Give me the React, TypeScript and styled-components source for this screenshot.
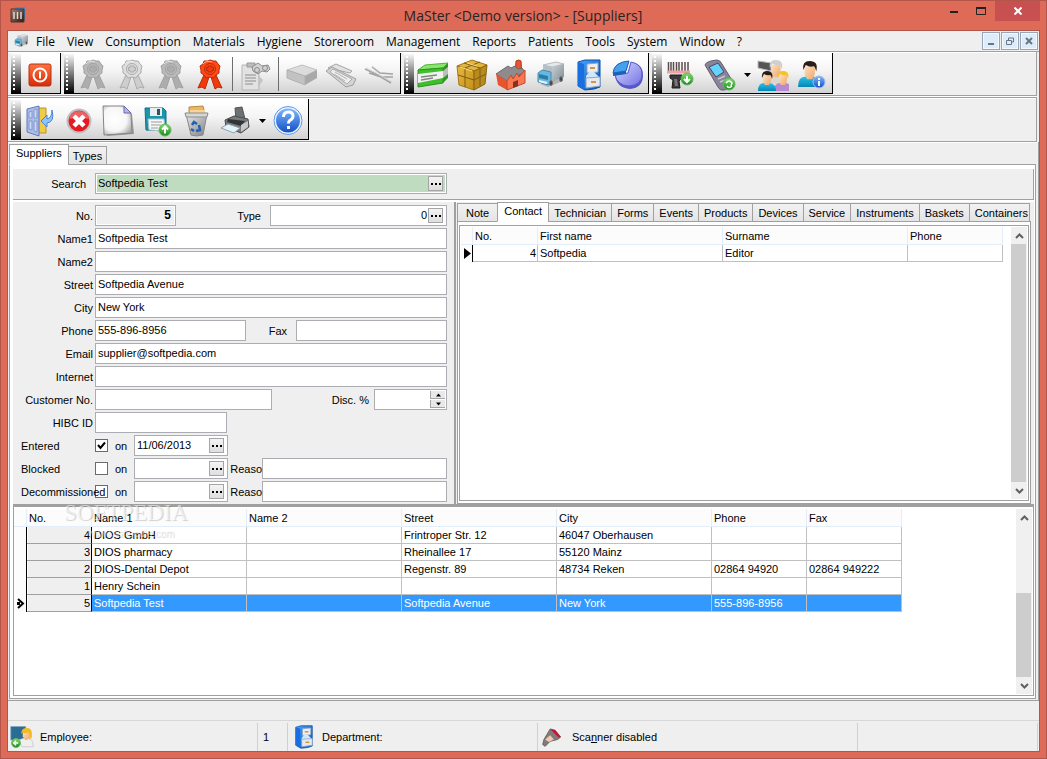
import React from 'react';
import styled, { createGlobalStyle, css } from 'styled-components';

const C = {
  frame: '#de6a58',
  frameDark: '#b35548',
  face: '#efefef',
  line: '#a0a0a0',
  edge: '#abadb3',
  cell: '#c0c0c0',
  head: '#e3eefb',
  select: '#3399ff',
};

const Global = createGlobalStyle`
  *, *::before, *::after { box-sizing: border-box; }
  body { margin: 0; background: ${C.frame}; font: 11px/13px "Liberation Sans", Arial, sans-serif; color: #000; }
  button, input { font: inherit; color: inherit; margin: 0; border-radius: 0; }
  button { padding: 0; border: 0; background: none; cursor: default; }
`;

/* ---------- window frame ---------- */

const Window = styled.div`
  display: flex;
  flex-direction: column;
  min-height: 100vh;
  border: 1px solid ${C.frameDark};
  padding: 0 6px 6px;
  background: ${C.frame};
`;

const TitleBar = styled.header`
  display: flex;
  height: 29px;
  padding-left: 3px;
`;

const AppIcon = styled.span`
  flex: 0 0 16px;
  padding-top: 6px;
`;

const Title = styled.h1`
  flex: 1;
  margin: 0;
  padding-left: 80px;
  text-align: center;
  font: 14px/29px "Open Sans", "Segoe UI", sans-serif;
  color: #2b2222;
`;

const Caption = styled.button<{ $close?: boolean }>`
  display: flex;
  justify-content: center;
  align-items: center;
  width: ${p => (p.$close ? 45 : 27)}px;
  height: 20px;
  ${p => p.$close && css`background: #c75050; margin-left: 1px;`}
`;

const Client = styled.div`
  flex: 1;
  display: flex;
  flex-direction: column;
  border: 1px solid ${C.frameDark};
  background: ${C.face};
`;

const MenuBar = styled.nav`
  display: flex;
  height: 21px;
  padding: 0 1px 0 5px;
  border-bottom: 1px solid ${C.line};
`;

const MenuIcon = styled.span`
  flex: 0 0 17px;
  padding-top: 2px;
`;

const MenuItem = styled.button`
  padding: 0 6px;
  font: 12px/17px "Open Sans", "Segoe UI", sans-serif;
`;

const MdiButtons = styled.div`
  display: flex;
  gap: 1px;
  margin-left: auto;
  padding-top: 1px;
`;

const MdiButton = styled.button`
  display: flex;
  align-items: center;
  justify-content: center;
  width: 18px;
  height: 18px;
  border: 1px solid #97a5b6;
  background: #deebf8;
  box-shadow: inset 0 0 0 1px #f2f8fe;
`;

/* ---------- tool bars ---------- */

const ToolRow = styled.div<{ $second?: boolean }>`
  display: flex;
  gap: 3px;
  height: 45px;
  padding: 1px 3px 0;
  margin-right: 2px;
  border: solid ${C.line};
  border-width: ${p => (p.$second ? '1px 1px 1px 0' : '0 1px 1px 0')};
  box-shadow: inset 0 1px #fff, 0 1px #fff;
  ${p => !p.$second && css`height: 44px; margin-bottom: 1px;`}
`;

const Band = styled.div`
  display: flex;
  height: 41px;
  border-right: 1px solid #000;
  border-bottom: 1px solid #000;
  background: linear-gradient(#fff 8%, #f4f4f4 45%, #d2d2d2);
`;

const Grip = styled.span`
  flex: 0 0 10px;
  background:
    repeating-linear-gradient(#fff 0 2px, transparent 2px 4px) 2px 3px / 2px 36px no-repeat,
    linear-gradient(#fff, #8c8c8c 45%, #000);
`;

const Tool = styled.button`
  display: flex;
  justify-content: center;
  align-items: center;
  width: 39px;
  padding: 3px 2px 0 0;
`;

const Drop = styled.button`
  display: flex;
  justify-content: center;
  align-items: center;
  width: 14px;
  padding-top: 3px;
`;

const Rule = styled.span`
  width: 1px;
  margin: 4px 4px 2px 2px;
  background: #6e6e6e;
`;

/* ---------- tabs ---------- */

const Pages = styled.main`
  flex: 1;
  display: flex;
  flex-direction: column;
  padding: 2px 2px 1px 1px;
  border-right: 1px solid ${C.line};
  border-bottom: 1px solid ${C.line};
`;

const TabStrip = styled.div`
  display: flex;
  align-items: flex-end;
  position: relative;
  z-index: 1;
  margin-bottom: -1px;
`;

const Tab = styled.button<{ $on?: boolean; $small?: boolean }>`
  flex: none;
  height: 19px;
  padding: 1px ${p => (p.$small ? 5 : 4)}px 0;
  border: 1px solid ${C.line};
  margin-left: -1px;
  white-space: nowrap;
  background: linear-gradient(#f2f2f2, #e4e4e4);
  &:first-child { margin-left: 0; padding: 1px 8px 0; }
  ${p => p.$small && css`&:last-child { padding-right: 1px; }`}
  ${p => p.$on && css`
    height: ${p.$small ? 20 : 21}px;
    padding: 0 6px 2px;
    border-bottom-color: #fff;
    background: #fff;
    &:first-child { padding: 0 6px 2px; }
  `}
`;

const Sheet = styled.section`
  flex: 1;
  display: flex;
  flex-direction: column;
  padding: 4px 1px 2px 3px;
  border: 1px solid ${C.line};
  background: #fff;
`;

const SearchBar = styled.div`
  display: flex;
  align-items: flex-start;
  height: 31px;
  padding: 4px 0 0 1px;
  margin-bottom: 2px;
  border-right: 1px solid ${C.line};
  border-bottom: 1px solid ${C.line};
  background: ${C.face};
`;

const Middle = styled.div`
  display: flex;
  height: 302px;
  background: ${C.face};
`;

const Form = styled.form`
  flex: 0 0 443px;
  min-width: 0;
  display: flex;
  flex-direction: column;
  gap: 2px;
  padding: 3px 0 0 1px;
  border-right: 2px solid ${C.line};
`;

const Row = styled.div`
  display: flex;
  height: 21px;
`;

const Label = styled.label<{ $w?: number; $left?: boolean; $pad?: number }>`
  position: relative;
  z-index: 1;
  flex: 0 0 ${p => p.$w ?? 81}px;
  min-width: 0;
  padding: 5px ${p => p.$pad ?? 2}px 0 0;
  text-align: right;
  white-space: nowrap;
  ${p => p.$left && css`text-align: left; padding-left: 7px;`}
`;

const Box = styled.span<{ $w: number; $tone?: string }>`
  display: flex;
  align-items: center;
  flex: 0 0 ${p => p.$w}px;
  min-width: 0;
  height: 21px;
  padding: 1px;
  border: 1px solid ${C.edge};
  background: ${p => p.$tone ?? '#fff'};
  background-clip: content-box;
  box-shadow: inset 0 0 0 1px #fff;
`;

const Text = styled.input<{ $right?: boolean; $bold?: boolean }>`
  flex: 1;
  min-width: 0;
  height: 17px;
  padding: 0 1px 2px;
  border: 0;
  outline: 0;
  background: none;
  text-align: ${p => (p.$right ? 'right' : 'left')};
  ${p => p.$bold && css`font-weight: bold; font-size: 12px; padding-right: 3px;`}
`;

const More = styled.button`
  display: flex;
  align-items: center;
  justify-content: center;
  flex: 0 0 15px;
  height: 15px;
  margin-right: 2px;
  border: 1px solid #a5a5a5;
  background: linear-gradient(#f4f4f4, #dedede);
`;

const Spin = styled.span`
  display: flex;
  flex-direction: column;
  flex: 0 0 15px;
  gap: 1px;
`;

const SpinButton = styled.button`
  display: flex;
  align-items: center;
  justify-content: center;
  height: 8px;
  border-left: 1px solid #a5a5a5;
  border-bottom: 1px solid #a5a5a5;
  background: #e8e8e8;
`;

const Check = styled.input`
  appearance: none;
  flex: 0 0 13px;
  height: 13px;
  margin-top: 4px;
  border: 1px solid #6b6b6b;
  background: #fff;
  &:checked {
    background: #fff url("data:image/svg+xml,%3Csvg xmlns='http://www.w3.org/2000/svg' viewBox='0 0 11 11'%3E%3Cpath d='M2 5l2.5 3L9 2.5' fill='none' stroke='%23000' stroke-width='2'/%3E%3C/svg%3E");
  }
`;

const Details = styled.div`
  flex: 1;
  min-width: 0;
  display: flex;
  flex-direction: column;
  padding: 0 3px 0 1px;
`;

const Pane = styled.div`
  flex: 1;
  display: flex;
  padding: 3px 1px 2px 1px;
  border: 1px solid ${C.line};
  background: #fff;
`;

/* ---------- grids ---------- */

const GridBox = styled.div<{ $main?: boolean }>`
  flex: 1;
  display: flex;
  justify-content: space-between;
  min-width: 0;
  min-height: 0;
  padding: 1px;
  border: 1px solid ${C.line};
  background: #fff;
  ${p => p.$main && css`border-top-width: 3px; padding: 2px 1px 1px 0;`}
`;

const Grid = styled.table`
  align-self: flex-start;
  table-layout: fixed;
  width: 0;
  border-collapse: separate;
  border-spacing: 0;
  line-height: 16px;
`;

const Th = styled.th`
  height: 18px;
  padding: 0 2px;
  text-align: left;
  font-weight: normal;
  background: #fcfcfc;
  border-right: 1px solid ${C.head};
  border-bottom: 1px solid ${C.head};
`;

const Td = styled.td<{ $fixed?: boolean; $num?: boolean; $on?: boolean }>`
  height: 17px;
  padding: 0 2px;
  white-space: nowrap;
  border-right: 1px solid ${C.cell};
  border-bottom: 1px solid ${C.cell};
  ${p => p.$num && css`text-align: right; padding-right: 1px;`}
  ${p => p.$fixed && css`
    background: ${C.face};
    border-right-color: #000;
    border-bottom-color: ${C.line};
    box-shadow: inset 1px 0 #fff;
  `}
  ${p => p.$on && css`background: ${C.select}; color: #fff;`}
`;

const Mark = styled.td`
  padding: 0 1px 0 0;
  text-align: right;
  line-height: 0;
  background: #fcfcfc;
  border-right: 1px solid #000;
`;

const Scroll = styled.div<{ $gap: number }>`
  flex: 0 0 16px;
  display: flex;
  flex-direction: column;
  background: #f0f0f0;
  &::before { content: ''; order: 1; flex: 0 1 ${p => p.$gap}px; }
`;

const ScrollButton = styled.button`
  display: flex;
  justify-content: center;
  align-items: center;
  flex: 0 0 17px;
  &:last-child { order: 3; }
`;

const Thumb = styled.span<{ $h?: number }>`
  order: 2;
  flex: ${p => (p.$h ? `0 0 ${p.$h}px` : '1')};
  margin-right: 1px;
  background: #cdcdcd;
`;

const GridArea = styled.div`
  flex: 1;
  display: flex;
  position: relative;
`;

const Watermark = styled.div`
  position: absolute;
  left: 51px;
  top: -4px;
  pointer-events: none;
  font: 23px/26px "Liberation Serif", serif;
  color: rgba(255, 255, 255, 0.55);
  text-shadow: 1px 1px 1px rgba(0, 0, 0, 0.18);
`;

const WatermarkUrl = styled.div`
  padding-left: 24px;
  font: 10px/16px "Liberation Sans", sans-serif;
  color: rgba(255, 255, 255, 0.5);
`;

/* ---------- status bars ---------- */

const EmptyBar = styled.div`
  height: 20px;
  border-bottom: 1px solid #d7d7d7;
`;

const Status = styled.footer`
  display: flex;
  height: 30px;
  padding: 2px 1px 0 0;
`;

const Cell = styled.div<{ $w?: number }>`
  display: flex;
  align-items: center;
  gap: 6px;
  flex: ${p => (p.$w ? `0 0 ${p.$w}px` : '1')};
  padding: 0 0 0 2px;
  border-right: 1px solid #d0d0d0;
`;

const StatusIcon = styled.span<{ $inset?: boolean }>`
  display: flex;
  align-items: center;
  flex: 0 0 ${p => (p.$inset ? 26 : 24)}px;
  ${p => p.$inset && css`padding-left: 2px;`}
`;

/* ---------- drawings ---------- */

const Defs = styled.svg`
  position: absolute;
  width: 0;
  height: 0;
`;

const Svg = ({ s = 32, children, box = 32 }: { s?: number; box?: number; children: React.ReactNode }) => (
  <svg width={s} height={s} viewBox={`0 0 ${box} ${box}`} fill="none" aria-hidden="true">{children}</svg>
);

const Gradient = ({ id, a, b, diag }: { id: string; a: string; b: string; diag?: boolean }) => (
  <linearGradient id={id} x1="0" y1="0" x2={diag ? 1 : 0} y2="1">
    <stop offset="0" stopColor={a} /><stop offset="1" stopColor={b} />
  </linearGradient>
);

const SharedGradients = () => (
  <Defs aria-hidden="true">
    <defs>
      <Gradient id="red" a="#ff7440" b="#d52c08" />
      <Gradient id="blue" a="#7db8ff" b="#1450c4" />
      <Gradient id="cab" a="#4aa5ff" b="#0753b8" diag />
      <Gradient id="green" a="#84df6c" b="#178a1e" />
      <Gradient id="gold" a="#e9b93e" b="#c48f18" diag />
      <Gradient id="steel" a="#c9d2d6" b="#7f8b92" diag />
      <Gradient id="metal" a="#e8e8e8" b="#777777" diag />
      <Gradient id="violet" a="#d9d9ff" b="#7272e4" diag />
      <Gradient id="skin" a="#ffe1bd" b="#eea670" diag />
      <Gradient id="shirt" a="#28c2ee" b="#0785b4" />
      <Gradient id="app" a="#a58576" b="#281814" diag />
      <radialGradient id="glow" cx=".4" cy=".45" r=".7">
        <stop offset="0" stopColor="#fff" /><stop offset=".6" stopColor="#f6f6f6" /><stop offset="1" stopColor="#a4a4a4" />
      </radialGradient>
    </defs>
  </Defs>
);

const Power = () => (
  <Svg>
    <rect x="5" y="5" width="22" height="22" rx="2" fill="url(#red)" stroke="#b33417" />
    <circle cx="16" cy="16" r="6.5" stroke="#fff" strokeWidth="2" />
    <path d="M16 12.500v7" stroke="#fff" strokeWidth="2" />
  </Svg>
);

const Ribbon = ({ tone }: { tone: 'grey' | 'light' | 'red' }) => {
  const [fill, dark, mid] = tone === 'red'
    ? ['#ff4a17', '#b92a08', '#f03a0c']
    : tone === 'light' ? ['#dedede', '#ababab', '#cecece'] : ['#b9b9b9', '#a2a2a2', '#adadad'];
  return (
    <Svg>
      <path d="M10 16L4 29l4-1 3 2 4-12zM22 16l6 13-4-1-3 2-4-12z" fill={mid} stroke={dark} />
      <path d="M16 1l3 1 3 0 2 3 2 2-1 4 0 3-3 2-2 3-4-1-4 1-2-3-3-2 0-3-1-4 3-2 1-3 4 0z" fill={fill} stroke={dark} />
      <circle cx="16" cy="10" r="5.500" stroke={dark} />
      <path d="M14 7h4v1.500h1.500v3H18V13h-4v-1.500h-1.500v-3H14z" fill={mid} stroke={dark} />
      <path d="M9 5q3-4 9-2" stroke="#fff" strokeOpacity=".6" />
    </Svg>
  );
};

const Report = () => (
  <Svg>
    <path d="M2 6h17v25H2z" fill="#e2e2e2" stroke="#b5b5b5" />
    <path d="M7 4h8v4H7z" fill="#bcbcbc" stroke="#9a9a9a" />
    <path d="M5 16h11M5 19h11M5 22h11M5 25h8" stroke="#8e8e8e" />
    <path d="M12 8l6-4 4 3 6-1 2 4-3 3-5-1-4 3-5-3z" fill="#d2d2d2" stroke="#8c8c8c" />
    <circle cx="25" cy="9" r="2.500" stroke="#8c8c8c" />
    <circle cx="17" cy="11" r="2.500" stroke="#8c8c8c" />
    <path d="M18 16l5 5-5 8z" fill="#c4c4c4" />
  </Svg>
);

const Carton = () => (
  <Svg>
    <path d="M1 11l15-5 15 5-12 6z" fill="#dcdcdc" stroke="#c0c0c0" />
    <path d="M1 11v8l18 7v-9z" fill="#c2c2c2" stroke="#b2b2b2" />
    <path d="M19 17l12-6v8l-12 7z" fill="#a9a9a9" />
  </Svg>
);

const Tray = () => (
  <Svg>
    <path d="M3 9l8-4 16 7-2 2z" fill="#e2e2e2" stroke="#a5a5a5" />
    <path d="M1 12L7 8l24 12-3 6-7 2z" fill="#d3d3d3" stroke="#a0a0a0" />
    <path d="M5 13l3-3 19 10-5 5z" fill="#eee" stroke="#acacac" />
    <path d="M10 13l12 7M9 15l11 7" stroke="#b4b4b4" />
  </Svg>
);

const Instruments = () => (
  <Svg>
    <path d="M1 10l11 5 15 9M8 8l8 6 13 1M5 14l12 4 12 0" stroke="#a3a3a3" strokeWidth="1.500" />
    <path d="M2 9l12 6 14 8M8 7l8 6" stroke="#d4d4d4" />
  </Svg>
);

const GreenBox = () => (
  <Svg>
    <path d="M1 11l7-5 23-2-5 5z" fill="#8be46d" stroke="#4cb53a" />
    <path d="M1 11l25-2v15L1 28z" fill="#3fbf2c" stroke="#2c9122" />
    <path d="M26 9l5-5v15l-5 5z" fill="#2b9a20" />
    <path d="M1 15l25-3v7L1 24z" fill="#f1f1f1" />
    <path d="M26 12l5-4v7l-5 4z" fill="#bdbdbd" />
    <path d="M4 18l16-2M4 21l12-2" stroke="#858585" strokeWidth="1.500" />
  </Svg>
);

const Crate = () => (
  <Svg>
    <path d="M1 7L16 1l15 5-12 6z" fill="#e3b53f" stroke="#a1781a" />
    <path d="M1 7l17 5v19L3 26z" fill="url(#gold)" stroke="#a1781a" />
    <path d="M18 12l13-6-2 19-11 6z" fill="#b98a1c" stroke="#8a6410" />
    <path d="M8 4l16 5v18M24 3L9 9v19M2 16l16 5 12-6" stroke="#7d5c15" />
    <path d="M4 8l12 4M11 4l10 3" stroke="#f8dc84" />
  </Svg>
);

const Factory = () => (
  <Svg>
    <path d="M21 2q2.500-2 5 0l1 15h-7z" fill="#e4562f" stroke="#ad3a1c" />
    <path d="M1 15L13 7l3 2 4-2 3 3 4-1 3 4-18 9z" fill="#8f8a8c" stroke="#6e696c" />
    <path d="M1 15l11 7v9L3 26z" fill="#e9542e" />
    <path d="M12 22l4-6 2 4 4-6 2 4 6-7v13l-18 7z" fill="#fb7751" stroke="#c24a28" />
    <path d="M18 23l5-2v6l-5 2z" fill="#7d3325" />
  </Svg>
);

const Truck = ({ s = 32 }: { s?: number }) => (
  <Svg s={s}>
    <path d="M6 25l8 3 15-6v-3z" fill="#000" fillOpacity=".2" />
    <path d="M9 6l13-3 8 2-12 3z" fill="#e4e9ec" stroke="#b4bdc2" />
    <path d="M9 6l9 2v14l-9-8z" fill="#b5bfc5" />
    <path d="M18 8l12-3v13l-12 5z" fill="url(#steel)" />
    <path d="M4 14l4-3 9 2v11l-3 2-10-3z" fill="#63b9e0" stroke="#4a8aad" />
    <path d="M5 15l9 2v4l-9-2z" fill="#2f7ba6" />
    <path d="M5 22l8 2" stroke="#e8f4fa" strokeWidth="2" />
    <ellipse cx="17" cy="24" rx="1.500" ry="2.500" fill="#444" stroke="#777" /><ellipse cx="27" cy="20" rx="1.500" ry="2.500" fill="#444" stroke="#777" />
  </Svg>
);

const Cabinet = ({ s = 32 }: { s?: number }) => (
  <Svg s={s}>
    <path d="M5 3l7-2h15v27l-6 2-9 1-7-4z" fill="url(#cab)" stroke="#0c4fa8" />
    <path d="M5 3l6 2v26l-6-4z" fill="#1a6fe0" />
    <path d="M14 5l11-1v9l-11 1z" fill="#eceef1" stroke="#8fa6c0" />
    <path d="M13 17l4-5 4 1 5 5-1 2-12 1z" fill="#cfe8fd" />
    <path d="M13 19l14-1v9l-14 2z" fill="#e6e9ee" stroke="#8fa6c0" />
    <path d="M17 8h5v2h-5zM18 22h5v2h-5z" fill="#d5963f" />
  </Svg>
);

const Pie = () => (
  <Svg>
    <path d="M3 17l13-2 3-12q12 2 12 13 0 13-13 14Q5 29 3 17z" fill="#5757c6" />
    <path d="M3 16l13-2 3-11q11 2 11 12 0 11-13 12Q5 26 3 16z" fill="url(#violet)" stroke="#5c5cd0" />
    <path d="M1 14Q2 3 17 2l-3 10v3L1 17z" fill="#1763b4" />
    <path d="M1 14Q2 3 17 2l-3 10z" fill="#45a0ee" stroke="#1c66b4" />
  </Svg>
);

const GreenDot = ({ x, y, children }: { x: number; y: number; children: React.ReactNode }) => (
  <g transform={`translate(${x} ${y})`}>
    <circle r="6" fill="url(#green)" stroke="#5fb65a" />{children}
  </g>
);

const Scanner = () => (
  <Svg>
    <path d="M3.500 3v10M6 3v10M8.500 3v10M11.500 3v10M14 3v10M17 3v10M20 3v10M23 3v10" stroke="#5c4c4c" strokeWidth="1.500" />
    <path d="M2 13h23" stroke="#eda3a3" strokeWidth="3" />
    <path d="M5 16h12l-1 4-2 2 1 7H7l1-8-3-2z" fill="#3a3a3a" stroke="#1b1b1b" />
    <path d="M9 20h3l1 7h-3z" fill="#777" />
    <GreenDot x={22} y={20}><path d="M0-3v6M-3 0l3 3 3-3" stroke="#fff" strokeWidth="2" /></GreenDot>
  </Svg>
);

const Handheld = () => (
  <Svg>
    <path d="M1 6q1-4 12-5 3 0 5 4l11 18q0 7-9 8-4 1-6-3z" fill="#8a8499" stroke="#625d74" />
    <path d="M5 8l9-4 6 9-8 5z" fill="#63d3fd" stroke="#4c495e" />
    <path d="M14 20l7-3M16 23l5-2" stroke="#c7c5d2" strokeWidth="1.500" />
    <GreenDot x={25} y={25}><path d="M-3-1q3-4 6 0l-1 3M3 2q-3 3-5 0" stroke="#fff" strokeWidth="1.500" /></GreenDot>
  </Svg>
);

const Person = ({ x = 0, y = 0, hair = '#2b1e18', shirt = 'url(#shirt)' }: { x?: number; y?: number; hair?: string; shirt?: string }) => (
  <g transform={`translate(${x} ${y})`}>
    <path d="M0 20q0-8 6-8l6 0q6 1 6 8z" fill={shirt} />
    <path d="M5 4h8v6l-2 4H7l-2-4z" fill="url(#skin)" />
    <path d="M4 7Q3 0 9 0q7 0 5 8-1-4-2-4-3 1-6-1-1 2-2 4z" fill={hair} />
  </g>
);

const People = () => (
  <Svg>
    <path d="M1 2l13 2v8L1 9z" fill="#555" stroke="#bbb" />
    <g transform="translate(8 1) scale(1.200)"><Person hair="#cfcfcf" shirt="#dcd6cc" /></g>
    <Person x={17} y={12} hair="#f6c326" shirt="#b68ad0" />
    <Person x={1} y={12} />
  </Svg>
);

const PersonInfo = () => (
  <Svg>
    <g transform="translate(2 2) scale(1.3)"><Person /></g>
    <circle cx="23" cy="23" r="6" fill="url(#blue)" stroke="#9ebcf0" />
    <path d="M23 19v2M23 22v5" stroke="#fff" strokeWidth="2" />
  </Svg>
);

const Door = () => (
  <Svg>
    <path d="M13 3h9v25h-9z" fill="#f1cb45" stroke="#b8952b" />
    <path d="M3 4l12-3v30L3 27z" fill="#a9bdea" stroke="#6179b8" />
    <path d="M5 7l3-1v7H5zM10 5l3-1v9h-3zM5 16h3v9l-3-1zM10 16h3v11l-3-1z" fill="#cad8f6" stroke="#8398cf" />
    <path d="M28 5q3 12-5 13v4l-6-6 6-6v4q5-1 5-9z" fill="#8ec3fa" stroke="#4b84d0" />
  </Svg>
);

const Cancel = () => (
  <Svg>
    <circle cx="16" cy="16" r="11.500" fill="#e41b23" stroke="#c0c0c0" strokeWidth="2" />
    <path d="M6 14Q8 6 16 6t10 8q-10-3-20 0z" fill="#fff" fillOpacity=".3" />
    <path d="M11 11l10 10M21 11L11 21" stroke="#fff" strokeWidth="4.500" />
  </Svg>
);

const Blank = () => (
  <Svg>
    <path d="M3 3h21l6 6 2 20-27 2z" fill="#444" fillOpacity=".45" />
    <path d="M1 1h21l7 7 1 20-28 2z" fill="url(#glow)" stroke="#868686" />
    <path d="M22 1v7h7z" fill="#b6b5ea" stroke="#6969a9" />
  </Svg>
);

const Save = () => (
  <Svg>
    <path d="M4 3h18l3 3v20l-20-1z" fill="#1a95ab" stroke="#0f6f83" />
    <path d="M9 3h12v8H9z" fill="#e9eef1" /><path d="M16 4h3v6h-3z" fill="#3a4f59" />
    <path d="M7 14h16l1 12-16-1z" fill="#f8f8f8" stroke="#a3c3cb" />
    <path d="M10 17h11M10 20h10M10 23h7" stroke="#999" />
    <GreenDot x={24} y={25}><path d="M0 3.500v-6M-3-.5l3-3 3 3" stroke="#fff" strokeWidth="2" /></GreenDot>
  </Svg>
);

const Bin = () => (
  <Svg>
    <path d="M9 2l14-1 2 8H9z" fill="#eab765" stroke="#b98b45" /><path d="M10 5h15v5H10z" fill="#f8d593" />
    <path d="M6 9h21l-4 21q-7 2-12 0z" fill="url(#metal)" fillOpacity=".9" stroke="#888" />
    <path d="M5 8h23l-1 4H6z" fill="#d3d7da" stroke="#8d8d8d" />
    <path d="M12 20l2-3 3 2M19 20l1 5-4 1M14 26l-3-2" stroke="#245fb6" strokeWidth="2.500" />
  </Svg>
);

const Printer = () => (
  <Svg>
    <path d="M16 3l7-1 3 12-9 1z" fill="#6d7073" stroke="#505254" />
    <path d="M6 15l9-4 14 3 1 8-8 6-15-6z" fill="#777a7d" stroke="#4a4c4e" />
    <path d="M9 14l17 2-4 5-14-4z" fill="#333436" />
    <path d="M2 23l7-4 12 4-6 5z" fill="#e2f3f9" stroke="#8ea2a9" />
    <path d="M22 20l7-4v6l-7 5z" fill="#c6c9cc" />
  </Svg>
);

const Help = () => (
  <Svg>
    <circle cx="16" cy="15.500" r="14" fill="#eaf3ff" stroke="#5e97e4" />
    <circle cx="16" cy="15.500" r="12" fill="url(#blue)" />
    <path d="M11.500 12q0-5 5-5 4.500 0 4.500 4 0 2.500-2.500 4-2 1-2 3.500M16.500 21v3" stroke="#fff" strokeWidth="3" />
  </Svg>
);

const Employee = () => (
  <Svg s={24}>
    <path d="M1 2h20v18H1z" fill="#2a6c94" stroke="#7fa8bf" />
    <path d="M12 20q6-3 12-3 7 2 7 12H16z" fill="#efefef" stroke="#c4c4c4" />
    <path d="M17 9h9v7l-3 4h-3l-3-5z" fill="url(#skin)" />
    <path d="M15 12q0-9 8-8 8 0 6 13l-4 3q2-7-1-10-4 2-7 0z" fill="#f2ba24" />
    <GreenDot x={8} y={24}><path d="M3 0h-6M0-3l-3 3 3 3" stroke="#fff" strokeWidth="2" /></GreenDot>
  </Svg>
);

const Torch = () => (
  <Svg s={20}>
    <path d="M13 3l8 2 9 11-5 4-12 3-8 8-4-3 2-8z" fill="#837b7a" stroke="#4b4747" />
    <path d="M13 3l8 2 9 11-3 1z" fill="#c31532" />
    <path d="M5 20l8-7 6 7-8 4z" fill="#efc9b4" />
  </Svg>
);

const AppMark = () => (
  <Svg s={16} box={16}>
    <path d="M5 0h10v13H5z" fill="#3c8ed8" />
    <path d="M1 2h13v13H1z" fill="url(#app)" stroke="#4b342d" />
    <path d="M4 5v7M7.500 5v7M11 5v7" stroke="#e0d7d2" strokeWidth="1.500" />
  </Svg>
);

const Arrow = ({ up, size = 7 }: { up?: boolean; size?: number }) => (
  <svg width={size} height="4" viewBox="0 0 7 4" aria-hidden="true"><path d={up ? 'M0 4h7L3.500 0z' : 'M0 0h7L3.500 4z'} fill="#000" /></svg>
);

const Chevron = ({ up }: { up?: boolean }) => (
  <svg width="9" height="6" viewBox="0 0 9 6" fill="none" aria-hidden="true">
    <path d={up ? 'M1 5l3.500-3.500L8 5' : 'M1 1l3.500 3.500L8 1'} stroke="#606060" strokeWidth="2" />
  </svg>
);

const Dots = () => (
  <svg width="10" height="2" viewBox="0 0 10 2" aria-hidden="true"><path d="M0 0h2v2H0zM4 0h2v2H4zM8 0h2v2H8z" fill="#000" /></svg>
);

/* ---------- pieces ---------- */

type Item = [string, React.ReactNode] | 'rule' | 'drop';

const ToolBand = ({ items }: { items: Item[] }) => (
  <Band>
    <Grip />
    {items.map((it, i) =>
      it === 'rule' ? <Rule key={i} />
        : it === 'drop' ? <Drop key={i} type="button" aria-label="More options"><Arrow /></Drop>
          : <Tool key={i} type="button" aria-label={it[0]}>{it[1]}</Tool>)}
  </Band>
);

const bands: Item[][] = [
  [['Exit', <Power />]],
  [
    ['Grey ribbon', <Ribbon tone="grey" />], ['Light ribbon', <Ribbon tone="light" />],
    ['Dark ribbon', <Ribbon tone="grey" />], ['Red ribbon', <Ribbon tone="red" />], 'rule',
    ['Report', <Report />], 'rule',
    ['Package', <Carton />], ['Tray', <Tray />], ['Instruments', <Instruments />],
  ],
  [
    ['Materials', <GreenBox />], ['Storeroom', <Crate />], ['Manufacturers', <Factory />],
    ['Suppliers', <Truck />], ['Departments', <Cabinet />], ['Statistics', <Pie />],
  ],
  [['Scan', <Scanner />], ['Handheld', <Handheld />], 'drop', ['Patients', <People />], ['Patient info', <PersonInfo />]],
];

const editBand: Item[] = [
  ['Close', <Door />], ['Cancel', <Cancel />], ['New', <Blank />], ['Save', <Save />],
  ['Delete', <Bin />], ['Print', <Printer />], 'drop', ['Help', <Help />],
];

const menus = ['File', 'View', 'Consumption', 'Materials', 'Hygiene', 'Storeroom', 'Management', 'Reports', 'Patients', 'Tools', 'System', 'Window', '?'];
const detailTabs = ['Note', 'Contact', 'Technician', 'Forms', 'Events', 'Products', 'Devices', 'Service', 'Instruments', 'Baskets', 'Containers'];

const MoreButton = ({ label }: { label: string }) => <More type="button" aria-label={label}><Dots /></More>;

const Field = ({ id, label, value = '', w = 352 }: { id: string; label: string; value?: string; w?: number }) => (
  <>
    <Label htmlFor={id}>{label}</Label>
    <Box $w={w}><Text id={id} defaultValue={value} /></Box>
  </>
);

const DateRow = ({ id, label, date = '', checked, reason }: { id: string; label: string; date?: string; checked?: boolean; reason?: boolean }) => (
  <Row>
    <Label htmlFor={id} $left $pad={0}>{label}</Label>
    <Check type="checkbox" id={id} defaultChecked={checked} />
    <Label htmlFor={`${id}-date`} $w={26} $left $pad={0}>on</Label>
    <Box $w={94}>
      <Text id={`${id}-date`} defaultValue={date} />
      <MoreButton label={`Choose ${label} date`} />
    </Box>
    {reason && (
      <>
        <Label htmlFor={`${id}-reason`} $w={34} $pad={0}>Reaso</Label>
        <Box $w={185}><Text id={`${id}-reason`} /></Box>
      </>
    )}
  </Row>
);

const VScroll = ({ gap = 0, thumb }: { gap?: number; thumb?: number }) => (
  <Scroll $gap={gap}>
    <ScrollButton type="button" aria-label="Scroll up"><Chevron up /></ScrollButton>
    <Thumb $h={thumb} />
    <ScrollButton type="button" aria-label="Scroll down"><Chevron /></ScrollButton>
  </Scroll>
);

const contactCols = [12, 65, 185, 185, 95];
const supplierCols = [13, 65, 155, 155, 155, 155, 95, 95];
const suppliers = [
  ['4', 'DIOS GmbH', '', 'Frintroper Str. 12', '46047 Oberhausen', '', ''],
  ['3', 'DIOS pharmacy', '', 'Rheinallee 17', '55120 Mainz', '', ''],
  ['2', 'DIOS-Dental Depot', '', 'Regenstr. 89', '48734 Reken', '02864 94920', '02864 949222'],
  ['1', 'Henry Schein', '', '', '', '', ''],
  ['5', 'Softpedia Test', '', 'Softpedia Avenue', 'New York', '555-896-8956', ''],
];

const Cols = ({ widths }: { widths: number[] }) => (
  <colgroup>{widths.map((w, i) => <col key={i} width={w} />)}</colgroup>
);

export default function App() {
  return (
    <Window>
      <Global />
      <SharedGradients />
      <TitleBar>
        <AppIcon><AppMark /></AppIcon>
        <Title>MaSter &lt;Demo version&gt; - [Suppliers]</Title>
        <Caption aria-label="Minimize"><svg width="8" height="4"><path d="M0 2h8v2H0z" fill="#222" /></svg></Caption>
        <Caption aria-label="Maximize"><svg width="10" height="8" fill="none"><path d="M.5 1h9v6.500h-9z" stroke="#222" /><path d="M0 1h10" stroke="#222" strokeWidth="2" /></svg></Caption>
        <Caption $close aria-label="Close"><svg width="8" height="8"><path d="M.5.5l7 7M7.500.5l-7 7" stroke="#fff" strokeWidth="2" /></svg></Caption>
      </TitleBar>
      <Client>
        <MenuBar>
          <MenuIcon><Truck s={16} /></MenuIcon>
          {menus.map(m => <MenuItem key={m} type="button">{m}</MenuItem>)}
          <MdiButtons>
            <MdiButton aria-label="Minimize document"><svg width="8" height="8"><path d="M1 6h6v2H1z" fill="#667789" /></svg></MdiButton>
            <MdiButton aria-label="Restore document"><svg width="8" height="8" fill="none"><path d="M2.500 3V1h5v4H6M.5 3.500h5v4h-5z" stroke="#667789" /></svg></MdiButton>
            <MdiButton aria-label="Close document"><svg width="8" height="8"><path d="M1 1l6 6M7 1L1 7" stroke="#667789" strokeWidth="2" /></svg></MdiButton>
          </MdiButtons>
        </MenuBar>
        <ToolRow>{bands.map((b, i) => <ToolBand key={i} items={b} />)}</ToolRow>
        <ToolRow $second><ToolBand items={editBand} /></ToolRow>

        <Pages>
          <TabStrip role="tablist">
            <Tab role="tab" aria-selected $on>Suppliers</Tab>
            <Tab role="tab">Types</Tab>
          </TabStrip>
          <Sheet>
            <SearchBar>
              <Label htmlFor="search" $pad={9}>Search</Label>
              <Box $w={352} $tone="#c0dcc0">
                <Text id="search" defaultValue="Softpedia Test" />
                <MoreButton label="Search suppliers" />
              </Box>
            </SearchBar>
            <Middle>
              <Form>
                <Row>
                  <Label htmlFor="no">No.</Label>
                  <Box $w={81} $tone={C.face}><Text id="no" defaultValue="5" $right $bold /></Box>
                  <Label htmlFor="type" $w={94} $pad={9}>Type</Label>
                  <Box $w={177}>
                    <Text id="type" defaultValue="0" $right />
                    <MoreButton label="Choose type" />
                  </Box>
                </Row>
                <Row><Field id="name1" label="Name1" value="Softpedia Test" /></Row>
                <Row><Field id="name2" label="Name2" /></Row>
                <Row><Field id="street" label="Street" value="Softpedia Avenue" /></Row>
                <Row><Field id="city" label="City" value="New York" /></Row>
                <Row>
                  <Field id="phone" label="Phone" value="555-896-8956" w={151} />
                  <Label htmlFor="fax" $w={50} $pad={9}>Fax</Label>
                  <Box $w={151}><Text id="fax" /></Box>
                </Row>
                <Row><Field id="email" label="Email" value="supplier@softpedia.com" /></Row>
                <Row><Field id="internet" label="Internet" /></Row>
                <Row>
                  <Field id="customer" label="Customer No." w={177} />
                  <Label htmlFor="discount" $w={102} $pad={5}>Disc. %</Label>
                  <Box $w={73}>
                    <Text id="discount" />
                    <Spin>
                      <SpinButton type="button" aria-label="Increase"><Arrow up size={5} /></SpinButton>
                      <SpinButton type="button" aria-label="Decrease"><Arrow size={5} /></SpinButton>
                    </Spin>
                  </Box>
                </Row>
                <Row><Field id="hibc" label="HIBC ID" w={132} /></Row>
                <DateRow id="entered" label="Entered" date="11/06/2013" checked />
                <DateRow id="blocked" label="Blocked" reason />
                <DateRow id="decommissioned" label="Decommissioned" reason />
              </Form>
              <Details>
                <TabStrip role="tablist">
                  {detailTabs.map(t => (
                    <Tab key={t} role="tab" $small $on={t === 'Contact'} aria-selected={t === 'Contact'}>{t}</Tab>
                  ))}
                </TabStrip>
                <Pane>
                  <GridBox>
                    <Grid>
                      <Cols widths={contactCols} />
                      <thead>
                        <tr><Th aria-label="Current row" /><Th>No.</Th><Th>First name</Th><Th>Surname</Th><Th>Phone</Th></tr>
                      </thead>
                      <tbody>
                        <tr>
                          <Mark><svg width="7" height="11"><path d="M0 0l7 5.500L0 11z" fill="#000" /></svg></Mark>
                          <Td $num>4</Td><Td>Softpedia</Td><Td>Editor</Td><Td />
                        </tr>
                      </tbody>
                    </Grid>
                    <VScroll />
                  </GridBox>
                </Pane>
              </Details>
            </Middle>
            <GridArea>
              <GridBox $main>
                <Grid>
                  <Cols widths={supplierCols} />
                  <thead>
                    <tr>
                      <Th aria-label="Current row" /><Th>No.</Th><Th>Name 1</Th><Th>Name 2</Th><Th>Street</Th><Th>City</Th><Th>Phone</Th><Th>Fax</Th>
                    </tr>
                  </thead>
                  <tbody>
                    {suppliers.map(row => {
                      const on = row[0] === '5';
                      return (
                        <tr key={row[0]}>
                          <Mark>{on && <svg width="8" height="11" fill="none"><path d="M1 1l5 4.500L1 10" stroke="#000" strokeWidth="2" /><path d="M0 4h3v3H0z" fill="#000" /></svg>}</Mark>
                          {row.map((v, i) => <Td key={i} $fixed={i === 0} $num={i === 0} $on={on && i > 0}>{v}</Td>)}
                        </tr>
                      );
                    })}
                  </tbody>
                </Grid>
                <VScroll gap={67} thumb={84} />
              </GridBox>
              <Watermark>SOFTPEDIA<WatermarkUrl>www.softpedia.com</WatermarkUrl></Watermark>
            </GridArea>
          </Sheet>
        </Pages>

        <EmptyBar />
        <Status>
          <Cell $w={250}><StatusIcon><Employee /></StatusIcon>Employee:</Cell>
          <Cell $w={30}><span>&nbsp;1</span></Cell>
          <Cell $w={250}><StatusIcon $inset><Cabinet s={24} /></StatusIcon>Department:</Cell>
          <Cell $w={320}><StatusIcon $inset><Torch /></StatusIcon><span>Sca<u>n</u>ner disabled</span></Cell>
          <Cell />
        </Status>
      </Client>
    </Window>
  );
}
